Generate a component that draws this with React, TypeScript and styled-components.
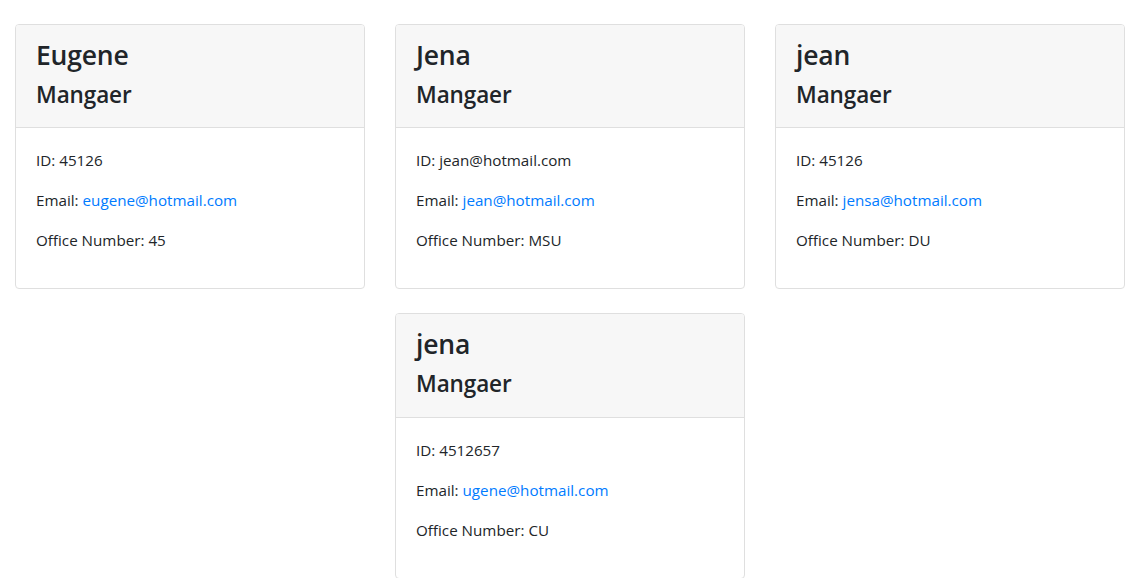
import React from "react";
import styled, { createGlobalStyle } from "styled-components";

const GlobalStyle = createGlobalStyle`
  * { box-sizing: border-box; }
  body {
    margin: 0;
    background: #fff;
    color: #212529;
    font-family: "Open Sans", "Noto Sans", sans-serif;
    font-size: 15.2px;
    line-height: 24px;
  }
`;

const Grid = styled.main`
  width: 1140px;
  display: flex;
  flex-wrap: wrap;
  justify-content: center;
  column-gap: 30px;
  row-gap: 24px;
  padding-top: 24px;
`;

const Card = styled.section`
  width: 350px;
  border: 1px solid #dfdfdf;
  border-radius: 4px;
  background: #fff;
  overflow: hidden;
`;

const Header = styled.header`
  background: #f7f7f7;
  border-bottom: 1px solid #dfdfdf;
  padding: 14px 20px 10px;
`;

const Name = styled.h3`
  margin: 0 0 8px;
  font-size: 26.5px;
  line-height: 33.6px;
  font-weight: 600;
  letter-spacing: -0.2px;
`;

const Role = styled.h4`
  margin: 0 0 8px;
  font-size: 22.5px;
  line-height: 28.8px;
  font-weight: 600;
  letter-spacing: -0.1px;
`;

const Body = styled.div`
  padding: 20px;
`;

const Line = styled.p`
  margin: 0 0 16px;
`;

const Link = styled.a`
  color: #007bff;
  text-decoration: none;
`;

type Employee = { name: string; role: string; id: string; email: string; office: string };

const employees: Employee[] = [
  { name: "Eugene", role: "Mangaer", id: "45126", email: "eugene@hotmail.com", office: "45" },
  { name: "Jena", role: "Mangaer", id: "jean@hotmail.com", email: "jean@hotmail.com", office: "MSU" },
  { name: "jean", role: "Mangaer", id: "45126", email: "jensa@hotmail.com", office: "DU" },
  { name: "jena", role: "Mangaer", id: "4512657", email: "ugene@hotmail.com", office: "CU" },
];

export default function App() {
  return (
    <>
      <GlobalStyle />
      <Grid>
        {employees.map((e, i) => (
          <Card key={i}>
            <Header>
              <Name>{e.name}</Name>
              <Role>{e.role}</Role>
            </Header>
            <Body>
              <Line>ID: {e.id}</Line>
              <Line>
                Email: <Link href={`mailto:${e.email}`}>{e.email}</Link>
              </Line>
              <Line>Office Number: {e.office}</Line>
            </Body>
          </Card>
        ))}
      </Grid>
    </>
  );
}
